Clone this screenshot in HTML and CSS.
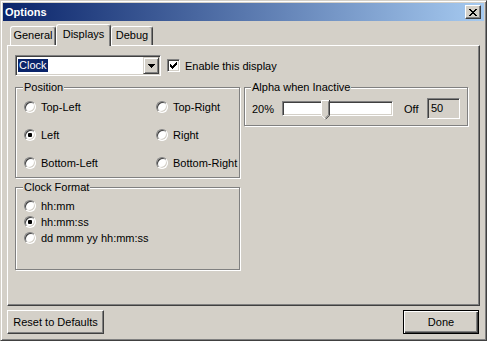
FILE: index.html
```html
<!DOCTYPE html>
<html lang="en">
<head>
    <meta charset="UTF-8">
    <title>Options</title>
    <link rel="stylesheet" href="styles.css">
</head>
<body>
    <div class="window">
        <div class="titlebar">
            <span class="title">Options</span>
            <span class="close-btn">
                <svg width="8" height="7" viewBox="0 0 8 7" shape-rendering="crispEdges">
                    <path d="M0 0h2v1H0zM6 0h2v1H6zM1 1h2v1H1zM5 1h2v1H5zM2 2h4v1H2zM3 3h2v1H3zM2 4h4v1H2zM1 5h2v1H1zM5 5h2v1H5zM0 6h2v1H0zM6 6h2v1H6z" fill="#000"/>
                </svg>
            </span>
        </div>
        <div class="dialog">
            <div class="tabs">
                <div class="tab tab-general">General</div>
                <div class="tab tab-displays active">Displays</div>
                <div class="tab tab-debug">Debug</div>
            </div>
            <div class="panel">
                <div class="top-row">
                    <div class="combo">
                        <span class="combo-text"><span class="sel">Clock</span></span>
                        <span class="combo-btn">
                            <svg width="7" height="4" viewBox="0 0 7 4" shape-rendering="crispEdges">
                                <path d="M0 0h7v1H0zM1 1h5v1H1zM2 2h3v1H2zM3 3h1v1H3z" fill="#000"/>
                            </svg>
                        </span>
                    </div>
                    <div class="check">
                        <span class="checkbox">
                            <svg width="7" height="7" viewBox="0 0 7 7" shape-rendering="crispEdges">
                                <path d="M6 0h1v3H6zM5 1h1v3H5zM0 2h1v3H0zM1 3h1v3H1zM2 4h1v3H2zM3 3h1v3H3zM4 2h1v3H4z" fill="#000"/>
                            </svg>
                        </span>
                        Enable this display
                    </div>
                </div>
                <div class="groups">
                    <div class="column">
                        <fieldset class="group position">
                            <legend>Position</legend>
                            <div class="position-grid">
                                <div class="option"><span class="radio"></span>Top-Left</div>
                                <div class="option"><span class="radio"></span>Top-Right</div>
                                <div class="option"><span class="radio checked"></span>Left</div>
                                <div class="option"><span class="radio"></span>Right</div>
                                <div class="option"><span class="radio"></span>Bottom-Left</div>
                                <div class="option"><span class="radio"></span>Bottom-Right</div>
                            </div>
                        </fieldset>
                        <fieldset class="group clock-format">
                            <legend>Clock Format</legend>
                            <div class="option"><span class="radio"></span>hh:mm</div>
                            <div class="option"><span class="radio checked"></span>hh:mm:ss</div>
                            <div class="option"><span class="radio"></span>dd mmm yy hh:mm:ss</div>
                        </fieldset>
                    </div>
                    <fieldset class="group alpha">
                        <legend>Alpha when Inactive</legend>
                        <div class="alpha-row">
                            <span class="pct">20%</span>
                            <div class="track">
                                <svg class="thumb" width="9" height="20" viewBox="0 0 9 20">
                                    <path d="M0 0h9v15l-4.5 4.5L0 15z" fill="#d4d0c8"/>
                                    <path d="M0.5 15.5V0.5h7.5" stroke="#fff" fill="none"/>
                                    <path d="M0.5 15.3l4 4" stroke="#fff" fill="none"/>
                                    <path d="M8.5 0v15.3l-4 4" stroke="#404040" fill="none"/>
                                    <path d="M7.5 1.5v13.4l-3 3" stroke="#808080" fill="none"/>
                                </svg>
                            </div>
                            <span class="off">Off</span>
                            <div class="value">50</div>
                        </div>
                    </fieldset>
                </div>
            </div>
            <div class="buttons">
                <button class="btn btn-reset">Reset to Defaults</button>
                <button class="btn btn-done">Done</button>
            </div>
        </div>
    </div>
</body>
</html>
```

FILE: styles.css
```css
* {
    box-sizing: border-box;
}
body {
    margin: 0;
    background-color: #d4d0c8;
    font-family: "Liberation Sans", Arial, sans-serif;
    font-size: 11px;
    color: #000;
}
.window {
    width: 487px;
    height: 341px;
    padding: 2px;
    background: #d4d0c8;
    border: 1px solid;
    border-color: #d4d0c8 #404040 #404040 #d4d0c8;
    box-shadow: inset 1px 1px 0 #fff, inset -1px -1px 0 #808080;
}
.titlebar {
    height: 18px;
    display: flex;
    align-items: center;
    justify-content: space-between;
    padding: 0 3px 0 2px;
    background: linear-gradient(to right, #0a246a, #a6caf0);
}
.title {
    color: #fff;
    font-weight: bold;
}
.close-btn {
    width: 16px;
    height: 14px;
    display: flex;
    align-items: center;
    justify-content: center;
    background: #d4d0c8;
    border: 1px solid;
    border-color: #fff #404040 #404040 #fff;
    box-shadow: inset -1px -1px 0 #808080;
}
.dialog {
    padding: 3px 4px 0;
}
.tabs {
    display: flex;
    align-items: flex-end;
    height: 21px;
    padding-left: 3px;
}
.tab {
    height: 19px;
    line-height: 17px;
    text-align: center;
    border: 1px solid;
    border-bottom: none;
    border-color: #fff #404040 #fff #fff;
    border-radius: 3px 3px 0 0;
    box-shadow: inset -1px 0 0 #808080;
}
.tab-general {
    width: 46px;
}
.tab-displays {
    width: 55px;
}
.tab-debug {
    width: 42px;
}
.tab.active {
    position: relative;
    z-index: 1;
    height: 22px;
    line-height: 18px;
    margin-bottom: -1px;
    background: #d4d0c8;
}
.panel {
    height: 261px;
    padding: 9px 7px;
    border: 1px solid;
    border-color: #fff #404040 #404040 #fff;
    box-shadow: inset -1px -1px 0 #808080;
}
.top-row {
    display: flex;
    align-items: center;
    height: 21px;
}
.combo {
    width: 146px;
    height: 21px;
    display: flex;
    align-items: center;
    padding: 1px;
    background: #fff;
    border: 1px solid;
    border-color: #808080 #fff #fff #808080;
    box-shadow: inset 1px 1px 0 #404040, inset -1px -1px 0 #d4d0c8;
}
.combo-text {
    flex: 1;
    display: flex;
    align-items: center;
    padding-left: 1px;
}
.sel {
    background: #0a246a;
    color: #fff;
    padding: 0 1px;
    line-height: 13px;
}
.combo-btn {
    width: 16px;
    height: 17px;
    display: flex;
    align-items: center;
    justify-content: center;
    background: #d4d0c8;
    border: 1px solid;
    border-color: #d4d0c8 #404040 #404040 #d4d0c8;
    box-shadow: inset 1px 1px 0 #fff, inset -1px -1px 0 #808080;
}
.check {
    display: flex;
    align-items: center;
    margin-left: 6px;
}
.checkbox {
    width: 13px;
    height: 13px;
    margin-right: 5px;
    display: flex;
    align-items: center;
    justify-content: center;
    background: #fff;
    border: 1px solid;
    border-color: #808080 #fff #fff #808080;
    box-shadow: inset 1px 1px 0 #404040, inset -1px -1px 0 #d4d0c8;
}
.groups {
    display: flex;
    align-items: flex-start;
    margin-top: 5px;
}
.column {
    width: 225px;
}
.group {
    margin: 0;
    min-width: 0;
    border: 1px solid #808080;
    box-shadow: 1px 1px 0 #fff, inset 1px 1px 0 #fff;
}
.group legend {
    padding: 0 1px;
    margin-left: -1px;
    line-height: 13px;
    background: #d4d0c8;
}
.position {
    width: 225px;
    padding: 5px 8px 6px;
}
.position-grid {
    display: grid;
    grid-template-columns: 132px 1fr;
    grid-auto-rows: 16px;
    row-gap: 12px;
}
.clock-format {
    width: 225px;
    margin-top: 3px;
    padding: 4px 8px 23px;
}
.option {
    display: flex;
    align-items: center;
    height: 16px;
    white-space: nowrap;
}
.radio {
    flex: none;
    width: 12px;
    height: 12px;
    margin-right: 5px;
    border-radius: 50%;
    background: #fff;
    border: 1px solid;
    border-color: #808080 #fff #fff #808080;
    box-shadow: inset 1px 1px 0 #404040, inset -1px -1px 0 #d4d0c8;
}
.radio.checked {
    background: radial-gradient(circle, #000 2px, #fff 2.5px);
}
.alpha {
    width: 224px;
    margin-left: 4px;
    padding: 4px 7px 6px;
}
.alpha-row {
    display: flex;
    align-items: center;
    height: 21px;
}
.pct {
    width: 30px;
}
.track {
    position: relative;
    width: 111px;
    height: 15px;
    background: #fff;
    border: 1px solid;
    border-color: #808080 #fff #fff #808080;
    box-shadow: inset 1px 1px 0 #404040, inset -1px -1px 0 #d4d0c8;
}
.thumb {
    position: absolute;
    left: 38px;
    top: -2px;
}
.off {
    width: 23px;
    margin-left: 11px;
}
.value {
    width: 33px;
    height: 21px;
    padding: 2px 3px;
    line-height: 14px;
    background: #d4d0c8;
    border: 1px solid;
    border-color: #808080 #fff #fff #808080;
    box-shadow: inset 1px 1px 0 #404040, inset -1px -1px 0 #d4d0c8;
}
.buttons {
    display: flex;
    justify-content: space-between;
    margin-top: 4px;
    padding-right: 1px;
}
.btn {
    height: 24px;
    padding: 0;
    font: inherit;
    color: #000;
    background: #d4d0c8;
    border: 1px solid;
    border-color: #fff #404040 #404040 #fff;
    box-shadow: inset -1px -1px 0 #808080;
}
.btn-reset {
    width: 97px;
}
.btn-done {
    width: 76px;
    border-color: #000;
    box-shadow: inset 1px 1px 0 #fff, inset -1px -1px 0 #404040, inset -2px -2px 0 #808080;
}
```
